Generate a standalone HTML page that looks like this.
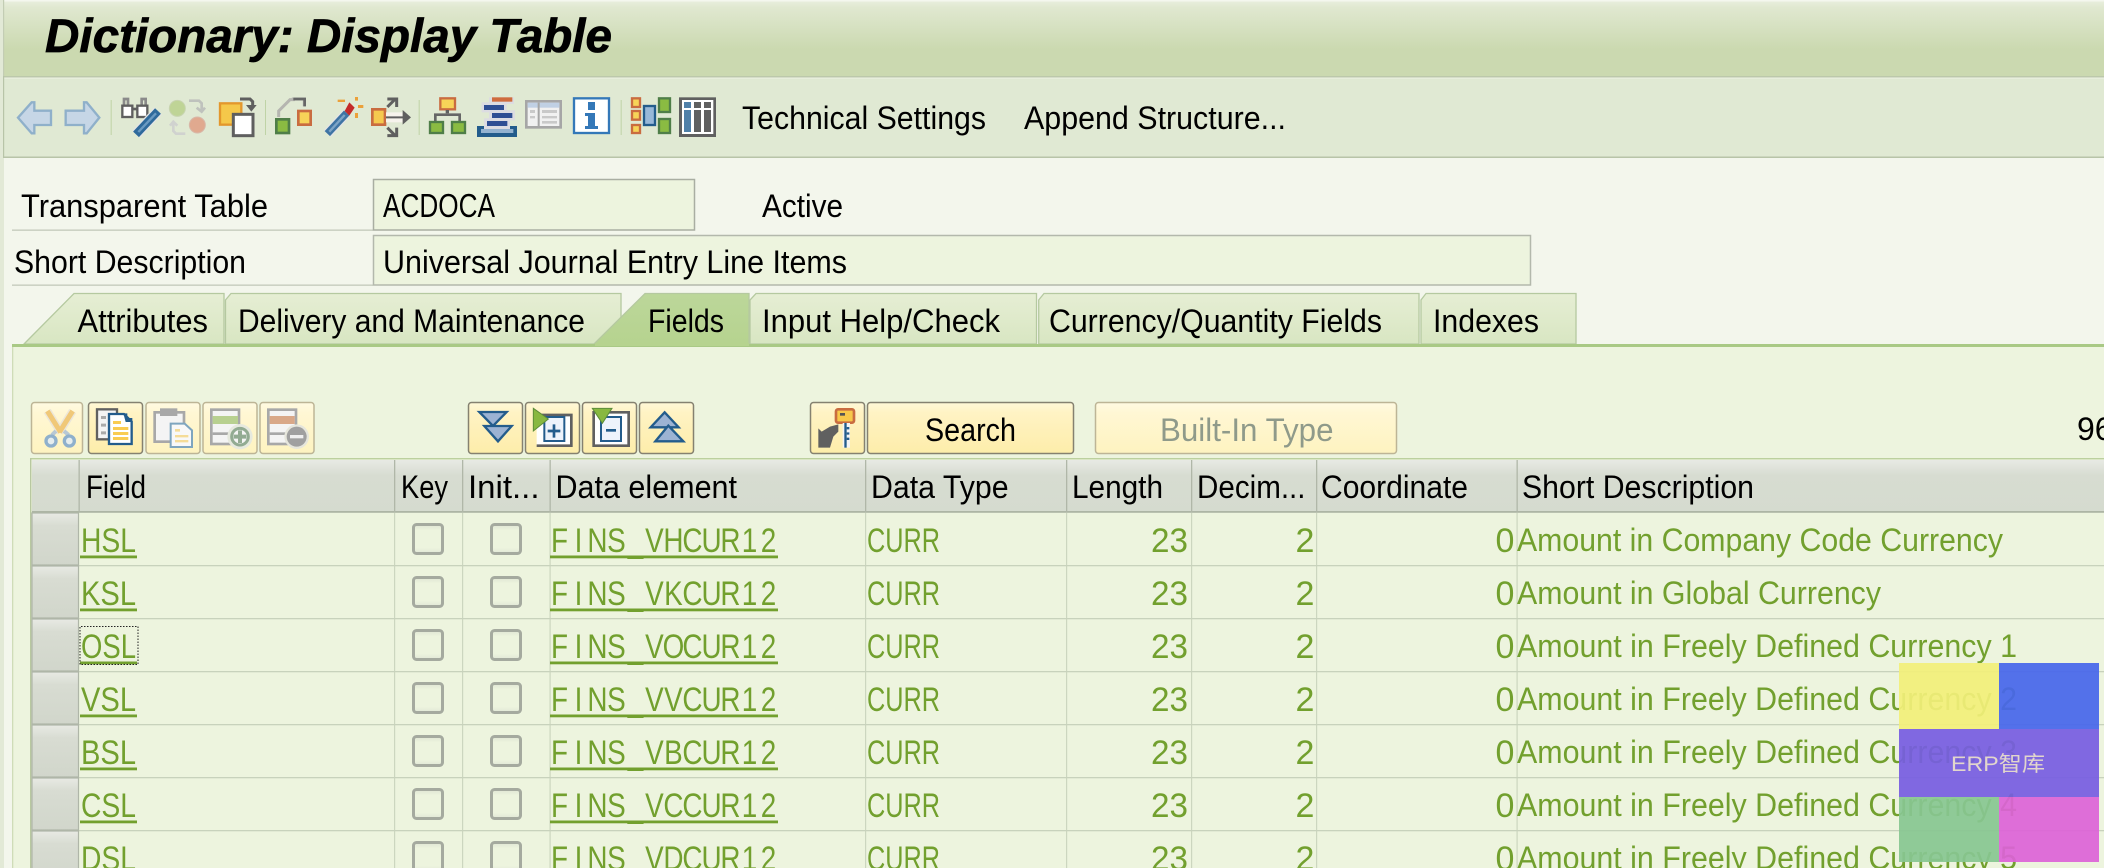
<!DOCTYPE html>
<html><head><meta charset="utf-8"><style>
html,body{margin:0;padding:0;background:#edf4de}
svg{display:block}
text{font-family:"Liberation Sans","Noto Sans CJK SC",sans-serif;font-size:32px;fill:#000}
.m{font-size:33px}
.g{fill:#72a02e}
.gm{font-size:34px;fill:#72a02e}
</style></head><body>
<svg xmlns="http://www.w3.org/2000/svg" width="2104" height="868" viewBox="0 0 2104 868">
<defs>
<linearGradient id="tb" x1="0" y1="0" x2="0" y2="1"><stop offset="0" stop-color="#eaf0df"/><stop offset=".1" stop-color="#e0e8d0"/><stop offset=".65" stop-color="#cbd9b0"/><stop offset="1" stop-color="#cbd9b0"/></linearGradient>
<linearGradient id="tab" x1="0" y1="0" x2="0" y2="1"><stop offset="0" stop-color="#e6eed4"/><stop offset="1" stop-color="#d8e6c2"/></linearGradient>
<linearGradient id="atab" x1="0" y1="0" x2="0" y2="1"><stop offset="0" stop-color="#bcd79a"/><stop offset="1" stop-color="#b6d38f"/></linearGradient>
<linearGradient id="btn" x1="0" y1="0" x2="0" y2="1"><stop offset="0" stop-color="#fff8d8"/><stop offset=".2" stop-color="#fff3c4"/><stop offset="1" stop-color="#fdedaa"/></linearGradient>
<linearGradient id="btnd" x1="0" y1="0" x2="0" y2="1"><stop offset="0" stop-color="#fffae2"/><stop offset=".2" stop-color="#fff7d4"/><stop offset="1" stop-color="#fef3c0"/></linearGradient>
<linearGradient id="hd" x1="0" y1="0" x2="0" y2="1"><stop offset="0" stop-color="#e8eae4"/><stop offset=".3" stop-color="#d7dcd1"/><stop offset="1" stop-color="#d5dbcf"/></linearGradient>
<linearGradient id="sel" x1="0" y1="0" x2="0" y2="1"><stop offset="0" stop-color="#e8eae4"/><stop offset=".25" stop-color="#d8dcd2"/><stop offset="1" stop-color="#d1d6cb"/></linearGradient>
<linearGradient id="cb" x1="0" y1="0" x2="0" y2="1"><stop offset="0" stop-color="#dfe5d3"/><stop offset=".2" stop-color="#edf4de"/><stop offset=".8" stop-color="#edf4de"/><stop offset="1" stop-color="#e0e6d6"/></linearGradient>
<symbol id="chk" overflow="visible"><rect x="1.5" y="1.5" width="29" height="29" rx="3" fill="url(#cb)" stroke="#a5aa9f" stroke-width="3"/></symbol>
</defs>

<!-- base -->
<rect width="2104" height="868" fill="#f3f6ec"/>
<rect x="0" y="0" width="4" height="868" fill="#e2e9d6"/>
<!-- title bar -->
<rect x="3" y="0" width="2101" height="76" fill="url(#tb)"/>
<rect x="3" y="0" width="2101" height="1.5" fill="#f4f7ee"/>
<rect x="3" y="0" width="1.2" height="157" fill="#c3cdb4"/>
<text x="45" y="52" textLength="567" lengthAdjust="spacingAndGlyphs" style="font-size:47px;font-weight:bold;font-style:italic;stroke:#000;stroke-width:.7px">Dictionary: Display Table</text>
<!-- toolbar -->
<rect x="3" y="76" width="2101" height="81" fill="#e0e9d3"/>
<rect x="3" y="76" width="2101" height="1.5" fill="#bcc8ab"/>
<rect x="3" y="77.5" width="2101" height="1" fill="#eef2e6"/>
<rect x="3" y="156.5" width="2101" height="1.5" fill="#b8c4a8"/>
<rect x="3" y="76" width="1.2" height="82" fill="#b8c4a8"/>
<text x="742" y="129" textLength="244" lengthAdjust="spacingAndGlyphs">Technical Settings</text>
<text x="1024" y="129" textLength="262" lengthAdjust="spacingAndGlyphs">Append Structure...</text>

<!-- toolbar icons left -->
<g transform="translate(0,85) scale(.33333)">
<path d="M54 98 95 52h8v25h50v43h-50v25h-8z" fill="#c6d6e6" stroke="#8fb0ca" stroke-width="7"/>
<path d="M197 77h55V52h8l38 46-38 47h-8v-25h-55z" fill="#c6d6e6" stroke="#8fb0ca" stroke-width="7"/>
<rect x="332" y="45" width="3" height="105" fill="#bfd3a6"/>
<!-- glasses + pencil -->
<path d="M372 60V42h12v18M425 60V42h12v18" fill="none" stroke="#8a8a8a" stroke-width="8"/>
<rect x="367" y="62" width="30" height="34" fill="#fff" stroke="#5f5f5f" stroke-width="7"/>
<rect x="412" y="62" width="30" height="34" fill="#fff" stroke="#5f5f5f" stroke-width="7"/>
<rect x="396" y="68" width="16" height="8" fill="#5f5f5f"/>
<path d="M408 148 474 78" stroke="#e4e4e4" stroke-width="32" fill="none"/>
<path d="M408 148 474 78" stroke="#2f6a9c" stroke-width="24" fill="none"/>
<path d="M415 141 468 85" stroke="#6b9ac2" stroke-width="7" fill="none"/>
<!-- swap -->
<circle cx="532" cy="70" r="24" fill="#bfd496" stroke="#c8d4b0" stroke-width="3"/>
<circle cx="592" cy="120" r="24" fill="#e0a98f" stroke="#d8b8a8" stroke-width="3"/>
<path d="M567 47h30l8 8v22M590 68l15 12 10-12" fill="none" stroke="#bfc2bd" stroke-width="8"/>
<path d="M520 112v26l8 8h28M510 122l10-12 12 12" fill="none" stroke="#d0d2cf" stroke-width="8"/>
<!-- copy -->
<rect x="660" y="55" width="64" height="64" fill="#f5c84a" stroke="#e3972c" stroke-width="7"/>
<rect x="700" y="88" width="59" height="64" fill="#fff" stroke="#5f5f5f" stroke-width="9"/>
<path d="M720 42h30l8 8v18" fill="none" stroke="#5f5f5f" stroke-width="9"/>
<path d="M738 60h32l-16 20z" fill="#5f5f5f"/>
<rect x="795" y="45" width="3" height="105" fill="#bfd3a6"/>
<!-- where used -->
<path d="M836 96V78l34-34 10 0 0 -2h33v22" fill="none" stroke="#b5b5b0" stroke-width="9"/>
<path d="M880 42h34v22" fill="none" stroke="#666" stroke-width="8"/>
<rect x="829" y="103" width="38" height="41" fill="#8abb42" stroke="#4f7e48" stroke-width="8"/>
<rect x="895" y="78" width="37" height="41" fill="#f7d458" stroke="#c96c40" stroke-width="8"/>
<!-- wand -->
<path d="M982 146 1040 84" stroke="#e4e4e4" stroke-width="30" fill="none"/>
<path d="M982 146 1040 84" stroke="#3f74a4" stroke-width="22" fill="none"/>
<path d="M988 140 1034 90" stroke="#7ea4c6" stroke-width="7" fill="none"/>
<path d="M1048 52 1064 68 1048 92 1034 78z" fill="#c42a2a"/>
<path d="M1013 44h22v7h-22zM1065 36h9v11h-9zM1074 60h16v9h-16zM1065 84h9v15h-9z" fill="#eba13a"/>
<!-- zoom/move -->
<rect x="1117" y="73" width="38" height="46" fill="#f5c94f" stroke="#c96c40" stroke-width="8"/>
</g>
<g transform="translate(380,85) scale(.33333)">
<path d="M22 42h28v24M46 42 22 66" fill="none" stroke="#5f5f5f" stroke-width="9"/>
<path d="M22 152h28v-24M46 152 22 128" fill="none" stroke="#5f5f5f" stroke-width="9"/>
<rect x="18" y="82" width="50" height="30" fill="#f6f3ec"/>
<path d="M18 97h58" stroke="#5f5f5f" stroke-width="6"/>
<path d="M68 75v44l25-22z" fill="#5f5f5f"/>
<rect x="116" y="45" width="3" height="105" fill="#bfd3a6"/>
<!-- hierarchy -->
<rect x="181" y="40" width="44" height="33" fill="#f7d458" stroke="#c96c40" stroke-width="7"/>
<rect x="197" y="75" width="10" height="10" fill="#606060"/>
<path d="M166 108V89h73v19" fill="none" stroke="#666" stroke-width="8"/>
<rect x="150" y="111" width="39" height="33" fill="#8abb42" stroke="#4f7e48" stroke-width="7"/>
<rect x="216" y="111" width="39" height="33" fill="#8abb42" stroke="#4f7e48" stroke-width="7"/>
<!-- stack -->
<rect x="327" y="37" width="75" height="20" fill="#dcdce2"/>
<rect x="305" y="52" width="75" height="30" fill="#dcdce2"/>
<rect x="327" y="76" width="78" height="30" fill="#dcdce2"/>
<rect x="312" y="100" width="78" height="30" fill="#dcdce2"/>
<rect x="336" y="37" width="61" height="13" fill="#cf6c3e"/>
<rect x="312" y="60" width="60" height="15" fill="#2f4f94"/>
<rect x="336" y="84" width="61" height="15" fill="#2f4f94"/>
<rect x="321" y="108" width="61" height="15" fill="#2f4f94"/>
<rect x="291" y="123" width="120" height="33" fill="#235c8c"/>
<rect x="303" y="132" width="97" height="12" fill="#93b2d0"/>
<rect x="312" y="123" width="78" height="9" fill="#dcdce2"/>
<!-- book -->
<rect x="439" y="49" width="103" height="78" fill="#f1f1f1" stroke="#a6a6a6" stroke-width="8"/>
<rect x="443" y="53" width="95" height="15" fill="#c0d0e4"/>
<rect x="473" y="53" width="6" height="70" fill="#a6a6a6"/>
<path d="M450 75h15v9h-15zM450 93h15v7h-15zM486 75h45v9h-45zM486 93h45v7h-45zM486 108h45v8h-45z" fill="#c9c9c9"/>
<!-- info -->
<rect x="582" y="40" width="105" height="104" fill="#fff" stroke="#3478b8" stroke-width="7"/>
<path d="M624 51h21v24h-21zM615 84h30v39h9v9h-39v-9h9V93h-9z" fill="#3478b8"/>
<rect x="722" y="45" width="3" height="105" fill="#bfd3a6"/>
<!-- align -->
<rect x="756" y="40" width="24" height="26" fill="#f7d458" stroke="#c96c40" stroke-width="7"/>
<rect x="756" y="78" width="24" height="26" fill="#f7d458" stroke="#c96c40" stroke-width="7"/>
<rect x="756" y="120" width="24" height="24" fill="#f7d458" stroke="#c96c40" stroke-width="7"/>
<rect x="792" y="63" width="33" height="57" fill="#98b8d8" stroke="#235c8c" stroke-width="7"/>
<rect x="837" y="40" width="33" height="41" fill="#8abb42" stroke="#4f7e48" stroke-width="7"/>
<rect x="837" y="102" width="33" height="42" fill="#8abb42" stroke="#4f7e48" stroke-width="7"/>
<!-- table -->
<rect x="897" y="37" width="111" height="119" fill="#606060"/>
<rect x="906" y="45" width="94" height="102" fill="#fff"/>
<path d="M912 51h21v18h-21zM912 75h21v66h-21z" fill="#5080a8"/>
<path d="M942 51h21v18h-21zM972 51h21v18h-21zM942 75h21v66h-21zM972 75h21v66h-21z" fill="#606060"/>
</g>

<!-- header fields -->
<text x="21" y="217" textLength="247" lengthAdjust="spacingAndGlyphs">Transparent Table</text>
<rect x="12" y="229.5" width="361" height="1.3" fill="#c3c8ba"/>
<rect x="373.5" y="179.5" width="321" height="50.5" fill="#edf4de" stroke="#a9aea2" stroke-width="1.5"/>
<text class="m" x="383" y="217" textLength="112" lengthAdjust="spacingAndGlyphs">ACDOCA</text>
<text x="762" y="217" textLength="81" lengthAdjust="spacingAndGlyphs">Active</text>
<text x="14" y="273" textLength="232" lengthAdjust="spacingAndGlyphs">Short Description</text>
<rect x="12" y="284.5" width="361" height="1.3" fill="#c3c8ba"/>
<rect x="373.5" y="235.5" width="1157" height="49.5" fill="#edf4de" stroke="#b3b8ac" stroke-width="1.5"/>
<text x="383" y="273" textLength="464" lengthAdjust="spacingAndGlyphs">Universal Journal Entry Line Items</text>

<!-- panel -->
<rect x="12" y="345" width="2092" height="523" fill="#edf4de"/>
<rect x="12" y="345" width="1.3" height="523" fill="#cfdcb8"/>
<!-- tabs -->
<g stroke="#b5c9a0" stroke-width="1.3" fill="url(#tab)">
<path d="M24 344 74 293.5H224V344z"/>
<path d="M225.5 344V300L231 293.5H621V344z"/>
<path d="M750 344V300L756 293.5H1036.5V344z"/>
<path d="M1038.7 344V300L1044 293.5H1419V344z"/>
<path d="M1421 344V300L1426 293.5H1576V344z"/>
<path d="M594 344 645 293.5H749V344z" fill="url(#atab)"/>
</g>
<rect x="12" y="344" width="2092" height="3" fill="#a9c985"/>
<rect x="595" y="343" width="154" height="3" fill="#b6d38f"/>
<text x="77.5" y="332" textLength="130.5" lengthAdjust="spacingAndGlyphs">Attributes</text>
<text x="238" y="332" textLength="347" lengthAdjust="spacingAndGlyphs">Delivery and Maintenance</text>
<text x="648" y="332" textLength="76" lengthAdjust="spacingAndGlyphs">Fields</text>
<text x="762" y="332" textLength="238" lengthAdjust="spacingAndGlyphs">Input Help/Check</text>
<text x="1049" y="332" textLength="333" lengthAdjust="spacingAndGlyphs">Currency/Quantity Fields</text>
<text x="1433" y="332" textLength="106" lengthAdjust="spacingAndGlyphs">Indexes</text>

<!-- table buttons -->
<g fill="url(#btnd)" stroke="#bdb596" stroke-width="1.5">
<rect x="31.5" y="402.5" width="51" height="51" rx="3"/>
<rect x="146" y="402.5" width="54" height="51" rx="3"/>
<rect x="203" y="402.5" width="54" height="51" rx="3"/>
<rect x="260" y="402.5" width="54" height="51" rx="3"/>
<rect x="1095.5" y="402.5" width="301" height="51" rx="3"/>
</g>
<g fill="url(#btn)" stroke="#858170" stroke-width="1.5">
<rect x="88.5" y="402.5" width="54" height="51" rx="3"/>
<rect x="468.5" y="402.5" width="54" height="51" rx="3"/>
<rect x="525.5" y="402.5" width="54" height="51" rx="3"/>
<rect x="582.5" y="402.5" width="54" height="51" rx="3"/>
<rect x="639.5" y="402.5" width="54" height="51" rx="3"/>
<rect x="810.5" y="402.5" width="54" height="51" rx="3"/>
<rect x="867.5" y="402.5" width="206" height="51" rx="3"/>
</g>
<text x="925" y="441" textLength="91" lengthAdjust="spacingAndGlyphs">Search</text>
<text x="1160" y="441" textLength="173.5" lengthAdjust="spacingAndGlyphs" style="fill:#8f9a8a">Built-In Type</text>
<text x="2077" y="440">96</text>

<g transform="translate(20,395) scale(.33333)">
<!-- scissors -->
<path d="M82 48 122 112M158 48 118 112" stroke="#ece6d8" stroke-width="24" fill="none"/>
<path d="M82 48 122 112M158 48 118 112" stroke="#f0c878" stroke-width="15" fill="none"/>
<path d="M108 108 96 120M132 108 146 120" stroke="#b8c8d4" stroke-width="12" fill="none"/>
<circle cx="93" cy="138" r="15" fill="#e6edee" stroke="#8fb0cc" stroke-width="10"/>
<circle cx="148" cy="138" r="15" fill="#e6edee" stroke="#8fb0cc" stroke-width="10"/>
<!-- copy doc -->
<rect x="231" y="43" width="60" height="90" fill="#f4f4f4" stroke="#606060" stroke-width="7"/>
<path d="M243 63h15v9h-15zM243 86h15v9h-15zM243 109h15v9h-15z" fill="#aaa"/>
<path d="M267 57h45l23 23v67h-68z" fill="#fff" stroke="#235c8c" stroke-width="7"/>
<path d="M310 55h12v14h15v12h-20z" fill="#235c8c"/>
<path d="M279 78h24v9h-24zM279 96h46v9h-46zM279 111h46v9h-46zM279 126h46v9h-46z" fill="#f9cc52"/>
<!-- paste -->
<rect x="404" y="52" width="88" height="88" fill="#f4f4f4" stroke="#a8a8a8" stroke-width="8"/>
<rect x="420" y="40" width="52" height="23" fill="#a8a8a8"/>
<path d="M452 86h42l22 20v50h-64z" fill="#f8f8f8" stroke="#7ea5bf" stroke-width="6"/>
<path d="M465 102h15v8h-15zM465 120h40v7h-40zM465 135h40v7h-40z" fill="#f5dc98"/>
<!-- insert row -->
<rect x="574" y="44" width="83" height="103" fill="#f4f4f4" stroke="#a8a8a8" stroke-width="8"/>
<rect x="578" y="63" width="76" height="24" fill="#b8d090"/>
<rect x="578" y="112" width="76" height="8" fill="#a8a8a8"/>
<circle cx="660" cy="125" r="38" fill="#e6e9de"/>
<circle cx="660" cy="125" r="25" fill="#f4f4f4" stroke="#92ab92" stroke-width="9"/>
<path d="M654 106h12v13h13v12h-13v13h-12v-13h-13v-12h13z" fill="#92ab92"/>
<!-- delete row -->
<rect x="745" y="44" width="83" height="103" fill="#f4f4f4" stroke="#a8a8a8" stroke-width="8"/>
<rect x="749" y="63" width="75" height="24" fill="#d9a888"/>
<rect x="749" y="112" width="75" height="8" fill="#a8a8a8"/>
<circle cx="830" cy="125" r="37" fill="#e6e6dc"/>
<circle cx="830" cy="125" r="30" fill="#a0a0a0"/>
<rect x="810" y="120" width="40" height="10" fill="#f0f0f0"/>
</g>

<g transform="translate(450,395) scale(.33333)">
<!-- collapse all -->
<path d="M88 51h82l-41 42z" fill="#9cb3d3" stroke="#235c8c" stroke-width="7"/>
<path d="M103 93h82l-41 46z" fill="#9cb3d3" stroke="#235c8c" stroke-width="7"/>
<!-- expand -->
<path d="M260 60h104v92H260" fill="#fff" stroke="#606060" stroke-width="8"/>
<path d="M283 66h60v72h-60z" fill="#eef3fb" stroke="#235c8c" stroke-width="6"/>
<path d="M308 88h8v16h15v8h-15v16h-8v-16h-15v-8h15z" fill="#235c8c"/>
<path d="M250 40 295 72 250 108z" fill="#88b840" stroke="#5c8c3a" stroke-width="3"/>
<!-- collapse -->
<path d="M431 52h105v100H431z" fill="#fff" stroke="#606060" stroke-width="8"/>
<path d="M453 66h60v72h-60z" fill="#eef3fb" stroke="#235c8c" stroke-width="6"/>
<rect x="468" y="102" width="30" height="8" fill="#235c8c"/>
<path d="M427 40h59l-29 45z" fill="#88b840" stroke="#5c8c3a" stroke-width="3"/>
<!-- expand all -->
<path d="M644 52 602 97h84z" fill="#9cb3d3" stroke="#235c8c" stroke-width="7"/>
<path d="M655 92 616 139h84z" fill="#9cb3d3" stroke="#235c8c" stroke-width="7"/>
<!-- key -->
<path d="M1105 100l10 10 25-15 25-7v22l-15 15-10 33h-35z" fill="#606060"/>
<rect x="1158" y="43" width="54" height="40" rx="6" fill="#f7c84a" stroke="#c96c40" stroke-width="8"/>
<rect x="1170" y="54" width="15" height="8" fill="#555"/>
<rect x="1178" y="84" width="22" height="74" fill="#f4f4f4"/>
<rect x="1183" y="84" width="7" height="74" fill="#235c8c"/>
<path d="M1190 96h8v7h-8zM1190 112h8v7h-8zM1190 128h8v7h-8z" fill="#235c8c"/>
</g>

<!-- table -->
<rect x="30" y="458" width="2074" height="1.4" fill="#bcd09e"/>
<rect x="30" y="458" width="1.4" height="410" fill="#b8c8a0"/>
<rect x="32" y="460" width="2072" height="52" fill="url(#hd)"/>
<rect x="32" y="511" width="2072" height="1.8" fill="#adb5a5"/>
<g fill="#b0b7a8">
<rect x="78.5" y="460" width="1.3" height="52"/><rect x="394" y="460" width="1.3" height="52"/><rect x="462" y="460" width="1.3" height="52"/><rect x="549.5" y="460" width="1.3" height="52"/><rect x="865" y="460" width="1.3" height="52"/><rect x="1066" y="460" width="1.3" height="52"/><rect x="1191" y="460" width="1.3" height="52"/><rect x="1316" y="460" width="1.3" height="52"/><rect x="1516.5" y="460" width="1.3" height="52"/>
</g>
<g fill="#ccd6bf">
<rect x="394" y="513" width="1.2" height="355"/><rect x="462" y="513" width="1.2" height="355"/><rect x="549.5" y="513" width="1.2" height="355"/><rect x="865" y="513" width="1.2" height="355"/><rect x="1066" y="513" width="1.2" height="355"/><rect x="1191" y="513" width="1.2" height="355"/><rect x="1316" y="513" width="1.2" height="355"/><rect x="1516.5" y="513" width="1.2" height="355"/>
</g>
<g fill="#c8d2bc">
<rect x="32" y="565" width="2072" height="1.3"/><rect x="32" y="618" width="2072" height="1.3"/><rect x="32" y="671" width="2072" height="1.3"/><rect x="32" y="724" width="2072" height="1.3"/><rect x="32" y="777" width="2072" height="1.3"/><rect x="32" y="830" width="2072" height="1.3"/>
</g>
<g fill="url(#sel)" stroke="#afb6a8" stroke-width="1.2">
<rect x="32" y="513" width="46.5" height="52"/><rect x="32" y="566" width="46.5" height="52"/><rect x="32" y="619" width="46.5" height="52"/><rect x="32" y="672" width="46.5" height="52"/><rect x="32" y="725" width="46.5" height="52"/><rect x="32" y="778" width="46.5" height="52"/><rect x="32" y="831" width="46.5" height="52"/>
</g>

<text x="86" y="498" textLength="60" lengthAdjust="spacingAndGlyphs">Field</text>
<text x="401" y="498" textLength="47" lengthAdjust="spacingAndGlyphs">Key</text>
<text x="468" y="498" textLength="71.5" lengthAdjust="spacingAndGlyphs">Init...</text>
<text x="555.5" y="498" textLength="181.5" lengthAdjust="spacingAndGlyphs">Data element</text>
<text x="871" y="498" textLength="137.6" lengthAdjust="spacingAndGlyphs">Data Type</text>
<text x="1072" y="498" textLength="91" lengthAdjust="spacingAndGlyphs">Length</text>
<text x="1197" y="498" textLength="108.5" lengthAdjust="spacingAndGlyphs">Decim...</text>
<text x="1321" y="498" textLength="147" lengthAdjust="spacingAndGlyphs">Coordinate</text>
<text x="1522" y="498" textLength="232" lengthAdjust="spacingAndGlyphs">Short Description</text>

<!-- rows -->
<g>
<text class="gm" x="81" y="552" textLength="55" lengthAdjust="spacingAndGlyphs">HSL</text>
<text class="gm" x="81" y="605" textLength="55" lengthAdjust="spacingAndGlyphs">KSL</text>
<text class="gm" x="81" y="658" textLength="55" lengthAdjust="spacingAndGlyphs">OSL</text>
<text class="gm" x="81" y="711" textLength="55" lengthAdjust="spacingAndGlyphs">VSL</text>
<text class="gm" x="81" y="764" textLength="55" lengthAdjust="spacingAndGlyphs">BSL</text>
<text class="gm" x="81" y="817" textLength="55" lengthAdjust="spacingAndGlyphs">CSL</text>
<text class="gm" x="81" y="870" textLength="55" lengthAdjust="spacingAndGlyphs">DSL</text>
</g>
<g>
<text class="gm" transform="translate(550,552) scale(.82,1)" x="1.2 30 45.6 69.7 94.8 116 138.3 161.5 184.7 207.8 233.8 257" y="0">FINS_VHCUR12</text>
<text class="gm" transform="translate(550,605) scale(.82,1)" x="1.2 30 45.6 69.7 94.8 116 139.2 161.5 184.7 207.8 233.8 257" y="0">FINS_VKCUR12</text>
<text class="gm" transform="translate(550,658) scale(.82,1)" x="1.2 30 45.6 69.7 94.8 116 137.4 161.5 184.7 207.8 233.8 257" y="0">FINS_VOCUR12</text>
<text class="gm" transform="translate(550,711) scale(.82,1)" x="1.2 30 45.6 69.7 94.8 116 139.2 161.5 184.7 207.8 233.8 257" y="0">FINS_VVCUR12</text>
<text class="gm" transform="translate(550,764) scale(.82,1)" x="1.2 30 45.6 69.7 94.8 116 139.2 161.5 184.7 207.8 233.8 257" y="0">FINS_VBCUR12</text>
<text class="gm" transform="translate(550,817) scale(.82,1)" x="1.2 30 45.6 69.7 94.8 116 138.3 161.5 184.7 207.8 233.8 257" y="0">FINS_VCCUR12</text>
<text class="gm" transform="translate(550,870) scale(.82,1)" x="1.2 30 45.6 69.7 94.8 116 138.3 161.5 184.7 207.8 233.8 257" y="0">FINS_VDCUR12</text>

<text class="gm" x="867" y="552" textLength="73" lengthAdjust="spacingAndGlyphs">CURR</text>
<text class="gm" x="867" y="605" textLength="73" lengthAdjust="spacingAndGlyphs">CURR</text>
<text class="gm" x="867" y="658" textLength="73" lengthAdjust="spacingAndGlyphs">CURR</text>
<text class="gm" x="867" y="711" textLength="73" lengthAdjust="spacingAndGlyphs">CURR</text>
<text class="gm" x="867" y="764" textLength="73" lengthAdjust="spacingAndGlyphs">CURR</text>
<text class="gm" x="867" y="817" textLength="73" lengthAdjust="spacingAndGlyphs">CURR</text>
<text class="gm" x="867" y="870" textLength="73" lengthAdjust="spacingAndGlyphs">CURR</text>

<text class="gm" x="1151" y="552" textLength="37" lengthAdjust="spacingAndGlyphs">23</text>
<text class="gm" x="1151" y="605" textLength="37" lengthAdjust="spacingAndGlyphs">23</text>
<text class="gm" x="1151" y="658" textLength="37" lengthAdjust="spacingAndGlyphs">23</text>
<text class="gm" x="1151" y="711" textLength="37" lengthAdjust="spacingAndGlyphs">23</text>
<text class="gm" x="1151" y="764" textLength="37" lengthAdjust="spacingAndGlyphs">23</text>
<text class="gm" x="1151" y="817" textLength="37" lengthAdjust="spacingAndGlyphs">23</text>
<text class="gm" x="1151" y="870" textLength="37" lengthAdjust="spacingAndGlyphs">23</text>

<text class="gm" x="1295.5" y="552">2</text>
<text class="gm" x="1295.5" y="605">2</text>
<text class="gm" x="1295.5" y="658">2</text>
<text class="gm" x="1295.5" y="711">2</text>
<text class="gm" x="1295.5" y="764">2</text>
<text class="gm" x="1295.5" y="817">2</text>
<text class="gm" x="1295.5" y="870">2</text>

<text class="gm" x="1495.5" y="552">0</text>
<text class="gm" x="1495.5" y="605">0</text>
<text class="gm" x="1495.5" y="658">0</text>
<text class="gm" x="1495.5" y="711">0</text>
<text class="gm" x="1495.5" y="764">0</text>
<text class="gm" x="1495.5" y="817">0</text>
<text class="gm" x="1495.5" y="870">0</text>

<text class="g" x="1517" y="551" textLength="486" lengthAdjust="spacingAndGlyphs">Amount in Company Code Currency</text>
<text class="g" x="1517" y="604" textLength="364" lengthAdjust="spacingAndGlyphs">Amount in Global Currency</text>
<text class="g" x="1517" y="657" textLength="500" lengthAdjust="spacingAndGlyphs">Amount in Freely Defined Currency 1</text>
<text class="g" x="1517" y="710" textLength="500" lengthAdjust="spacingAndGlyphs">Amount in Freely Defined Currency 2</text>
<text class="g" x="1517" y="763" textLength="500" lengthAdjust="spacingAndGlyphs">Amount in Freely Defined Currency 3</text>
<text class="g" x="1517" y="816" textLength="500" lengthAdjust="spacingAndGlyphs">Amount in Freely Defined Currency 4</text>
<text class="g" x="1517" y="869" textLength="500" lengthAdjust="spacingAndGlyphs">Amount in Freely Defined Currency 5</text>
</g>
<g fill="#72a02e">
<rect x="80" y="555.5" width="57" height="2.8"/><rect x="80" y="608.5" width="57" height="2.8"/><rect x="80" y="661.5" width="57" height="2.8"/><rect x="80" y="714.5" width="57" height="2.8"/><rect x="80" y="767.5" width="57" height="2.8"/><rect x="80" y="820.5" width="57" height="2.8"/>
<rect x="550" y="555.5" width="228" height="2.8"/><rect x="550" y="608.5" width="228" height="2.8"/><rect x="550" y="661.5" width="228" height="2.8"/><rect x="550" y="714.5" width="228" height="2.8"/><rect x="550" y="767.5" width="228" height="2.8"/><rect x="550" y="820.5" width="228" height="2.8"/>
</g>
<path d="M80 664.5V626.5H138V664.5H80" fill="none" stroke="#222" stroke-width="1" stroke-dasharray="1.5 1.5"/>

<use href="#chk" x="412" y="523"/><use href="#chk" x="490" y="523"/>
<use href="#chk" x="412" y="576"/><use href="#chk" x="490" y="576"/>
<use href="#chk" x="412" y="629"/><use href="#chk" x="490" y="629"/>
<use href="#chk" x="412" y="682"/><use href="#chk" x="490" y="682"/>
<use href="#chk" x="412" y="735"/><use href="#chk" x="490" y="735"/>
<use href="#chk" x="412" y="788"/><use href="#chk" x="490" y="788"/>
<use href="#chk" x="412" y="841"/><use href="#chk" x="490" y="841"/>

<!-- watermark -->
<g opacity=".92">
<rect x="1899" y="663" width="100" height="66" fill="#f3f07a"/>
<rect x="1999" y="663" width="100" height="66" fill="#4766ec"/>
<rect x="1899" y="729" width="200" height="68" fill="#775de2"/>
<rect x="1899" y="797" width="100" height="65" fill="#88c792"/>
<rect x="1999" y="797" width="100" height="65" fill="#dd63d8"/>
</g>
<text x="1951" y="771" textLength="94" lengthAdjust="spacingAndGlyphs" style="font-size:21px;fill:#e2d6cc;font-family:'Liberation Sans','Noto Sans CJK SC',sans-serif">ERP智库</text>
</svg>
</body></html>
